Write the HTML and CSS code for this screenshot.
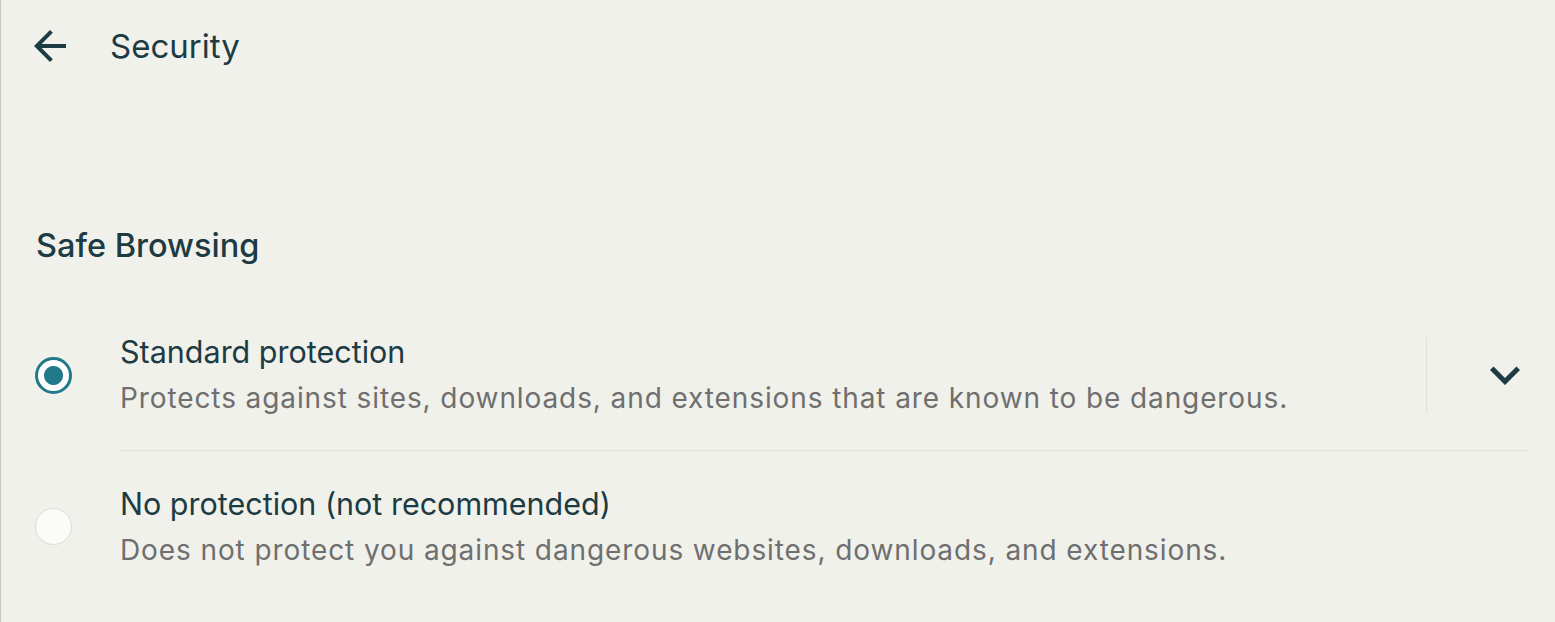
FILE: index.html
```html
<!DOCTYPE html>
<html>
<head>
    <title>Security</title>
    <link rel="stylesheet" href="styles.css">
</head>
<body>
    <div class="page">
        <div class="header">
            <button class="back-button" aria-label="Back">
                <svg width="48" height="48" viewBox="0 0 24 24"><path d="M20 11H7.83l5.59-5.59L12 4l-8 8 8 8 1.41-1.41L7.83 13H20v-2z" fill="#1d3b43"/></svg>
            </button>
            <h1>Security</h1>
        </div>

        <h2 class="section-title">Safe Browsing</h2>

        <div class="option first">
            <span class="radio checked"></span>
            <div class="option-body">
                <div class="option-text">
                    <div class="option-label">Standard protection</div>
                    <div class="option-desc">Protects against sites, downloads, and extensions that are known to be dangerous.</div>
                </div>
                <div class="divider"></div>
                <button class="expand-button" aria-label="Expand">
                    <svg width="30" height="30" viewBox="6 6 12 12"><path d="M16.59 8.59L12 13.17 7.41 8.59 6 10l6 6 6-6z" fill="#1d3b43"/></svg>
                </button>
            </div>
        </div>

        <div class="option">
            <span class="radio"></span>
            <div class="option-body last">
                <div class="option-text">
                    <div class="option-label">No protection (not recommended)</div>
                    <div class="option-desc">Does not protect you against dangerous websites, downloads, and extensions.</div>
                </div>
            </div>
        </div>
    </div>
</body>
</html>
```

FILE: styles.css
```css
html, body {
    margin: 0;
    height: 100%;
}
body {
    background-color: #f1f1ec;
    font-family: Inter, "Liberation Sans", sans-serif;
    color: #1d3b43;
}
.page {
    height: 100%;
    border-left: 1px solid #c9c9c4;
    box-sizing: border-box;
    padding-right: 26px;
}
.header {
    display: flex;
    align-items: center;
    height: 92px;
    padding-left: 25px;
}
.back-button {
    background: none;
    border: none;
    padding: 0;
    width: 48px;
    height: 48px;
    display: flex;
    align-items: center;
    justify-content: center;
    cursor: pointer;
}
.header h1 {
    margin: 0 0 0 36px;
    font-size: 33px;
    font-weight: normal;
}
.section-title {
    margin: 134px 0 0 35px;
    font-size: 32.5px;
    font-weight: 500;
    line-height: 40px;
}
.option {
    display: flex;
    align-items: stretch;
}
.option.first {
    margin-top: 33px;
}
.radio {
    flex: none;
    align-self: center;
    width: 37px;
    height: 37px;
    margin: 0 48px 0 34px;
    border-radius: 50%;
    box-sizing: border-box;
    border: 1px solid #dcdcd6;
    background-color: #fbfbf8;
}
.radio.checked {
    border: 3px solid #22798a;
    background: radial-gradient(circle, #22798a 0 9px, #ffffff 10px);
}
.option-body {
    flex: 1;
    display: flex;
    align-items: center;
    height: 151px;
    border-bottom: 1px solid #e0e1dc;
}
.option-body.last {
    border-bottom: none;
}
.option-text {
    flex: 1;
}
.option-label {
    font-size: 30.5px;
    line-height: 46px;
}
.option-desc {
    font-size: 28px;
    letter-spacing: 0.9px;
    line-height: 46px;
    color: #6e6f6e;
}
.divider {
    width: 1px;
    height: 76px;
    background-color: #e0e1dc;
}
.expand-button {
    background: none;
    border: none;
    padding: 0 9px 0 0;
    width: 102px;
    height: 60px;
    display: flex;
    align-items: center;
    justify-content: flex-end;
    cursor: pointer;
}
```
